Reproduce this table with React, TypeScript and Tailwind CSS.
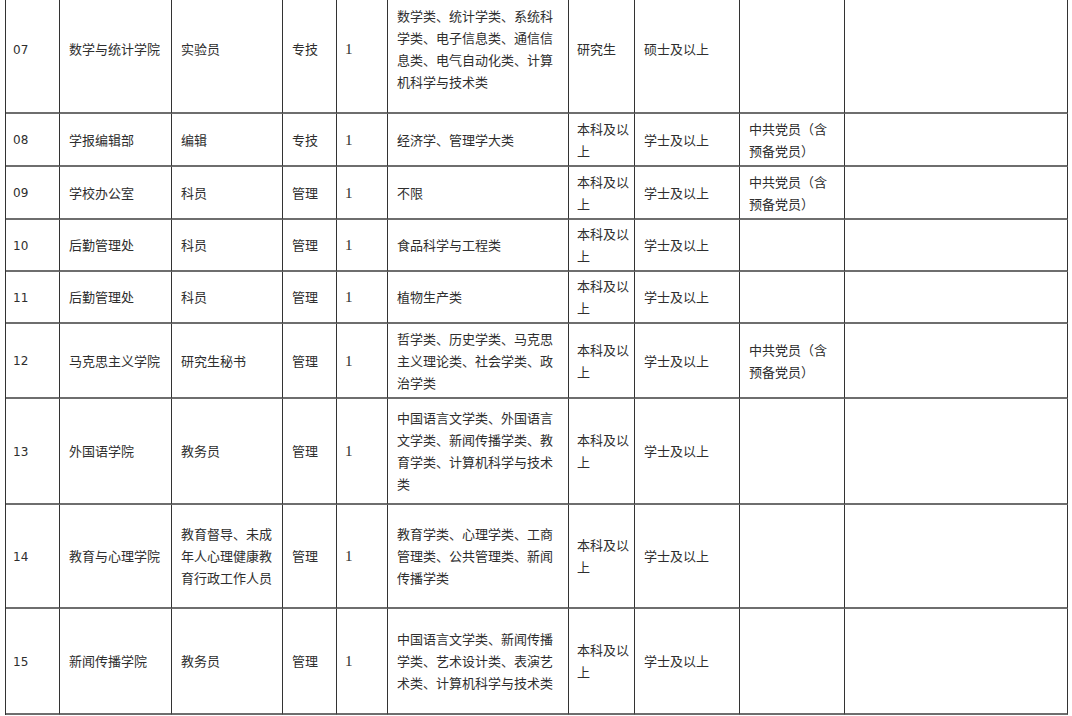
const cols = "grid-cols-[54px_112px_111px_54px_51px_181px_66px_105px_105px_223px]";

type Row = {
  no: string;
  dept: string;
  post: string;
  type: string;
  count: string;
  major: string;
  edu: string;
  degree: string;
  other: string;
  h: string;
};

const rows: Row[] = [
  {
    no: "07",
    dept: "数学与统计学院",
    post: "实验员",
    type: "专技",
    count: "1",
    major: "数学类、统计学类、系统科学类、电子信息类、通信信息类、电气自动化类、计算机科学与技术类",
    edu: "研究生",
    degree: "硕士及以上",
    other: "",
    h: "h-[128px]",
  },
  { no: "08", dept: "学报编辑部", post: "编辑", type: "专技", count: "1", major: "经济学、管理学大类", edu: "本科及以上", degree: "学士及以上", other: "中共党员（含预备党员）", h: "h-[53px]" },
  { no: "09", dept: "学校办公室", post: "科员", type: "管理", count: "1", major: "不限", edu: "本科及以上", degree: "学士及以上", other: "中共党员（含预备党员）", h: "h-[53px]" },
  { no: "10", dept: "后勤管理处", post: "科员", type: "管理", count: "1", major: "食品科学与工程类", edu: "本科及以上", degree: "学士及以上", other: "", h: "h-[52px]" },
  { no: "11", dept: "后勤管理处", post: "科员", type: "管理", count: "1", major: "植物生产类", edu: "本科及以上", degree: "学士及以上", other: "", h: "h-[52px]" },
  {
    no: "12",
    dept: "马克思主义学院",
    post: "研究生秘书",
    type: "管理",
    count: "1",
    major: "哲学类、历史学类、马克思主义理论类、社会学类、政治学类",
    edu: "本科及以上",
    degree: "学士及以上",
    other: "中共党员（含预备党员）",
    h: "h-[75px]",
  },
  {
    no: "13",
    dept: "外国语学院",
    post: "教务员",
    type: "管理",
    count: "1",
    major: "中国语言文学类、外国语言文学类、新闻传播学类、教育学类、计算机科学与技术类",
    edu: "本科及以上",
    degree: "学士及以上",
    other: "",
    h: "h-[106px]",
  },
  {
    no: "14",
    dept: "教育与心理学院",
    post: "教育督导、未成年人心理健康教育行政工作人员",
    type: "管理",
    count: "1",
    major: "教育学类、心理学类、工商管理类、公共管理类、新闻传播学类",
    edu: "本科及以上",
    degree: "学士及以上",
    other: "",
    h: "h-[104px]",
  },
  {
    no: "15",
    dept: "新闻传播学院",
    post: "教务员",
    type: "管理",
    count: "1",
    major: "中国语言文学类、新闻传播学类、艺术设计类、表演艺术类、计算机科学与技术类",
    edu: "本科及以上",
    degree: "学士及以上",
    other: "",
    h: "h-[106px]",
  },
];

function Cell({ children, className = "" }: { children?: React.ReactNode; className?: string }) {
  return (
    <div className={`flex items-center border-r border-b-2 border-r-[#333] border-b-[#6e6e6e] ${className}`}>
      <div className="w-full">{children}</div>
    </div>
  );
}

export default function App() {
  return (
    <div className="h-[716px] w-[1072px] overflow-hidden bg-white">
      <div
        className="-mt-[14px] ml-[5px] w-[1063px] border-l border-[#333] text-[13px] leading-[22px] text-[#2e2e2e]"
        style={{ fontFamily: '"Noto Sans CJK SC", "Noto Sans", sans-serif' }}
      >
        {rows.map((r) => (
          <div key={r.no} className={`grid ${cols} ${r.h}`}>
            <Cell className="pl-[7px]">
              <span className="text-[12px]" style={{ fontFamily: '"DejaVu Sans", sans-serif' }}>
                {r.no}
              </span>
            </Cell>
            <Cell className="pl-[9px] pr-[4px]">{r.dept}</Cell>
            <Cell className="pl-[9px] pr-[6px]">{r.post}</Cell>
            <Cell className="pl-[9px] pr-[4px]">{r.type}</Cell>
            <Cell className="pl-[8px]">
              <span className="text-[15px]" style={{ fontFamily: '"Liberation Serif", serif' }}>
                {r.count}
              </span>
            </Cell>
            <Cell className="pl-[9px] pr-[9px]">{r.major}</Cell>
            <Cell className="pl-[8px] pr-[4px]">{r.edu}</Cell>
            <Cell className="pl-[9px] pr-[6px]">{r.degree}</Cell>
            <Cell className="pl-[9px] pr-[9px]">{r.other}</Cell>
            <Cell />
          </div>
        ))}
      </div>
    </div>
  );
}
